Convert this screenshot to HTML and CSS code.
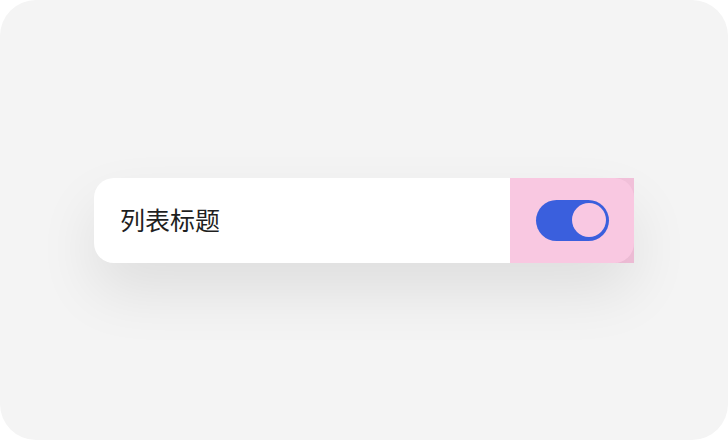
FILE: index.html
```html
<!DOCTYPE html>
<html lang="zh-CN">
<head>
    <meta charset="UTF-8">
    <meta name="viewport" content="width=device-width, initial-scale=1.0">
    <title>列表</title>
    <link rel="stylesheet" href="styles.css">
</head>
<body>
    <div class="stage">
        <div class="list-item">
            <div class="list-title">列表标题</div>
            <div class="list-action">
                <div class="switch">
                    <span class="switch-knob"></span>
                </div>
            </div>
        </div>
    </div>
</body>
</html>
```

FILE: styles.css
```css
body {
    margin: 0;
    background: #fff;
    font-family: "Noto Sans CJK SC", "Noto Sans", sans-serif;
}

.stage {
    width: 728px;
    height: 440px;
    background: #f4f4f4;
    border-radius: 36px;
    display: flex;
    align-items: center;
    justify-content: center;
}

.list-item {
    width: 540px;
    height: 85px;
    background: #fff;
    border-radius: 20px;
    display: flex;
    align-items: stretch;
    box-shadow: 0 28px 60px rgba(0, 0, 0, 0.09);
}

.list-title {
    flex: 1;
    display: flex;
    align-items: center;
    padding-left: 26px;
    padding-bottom: 2px;
    font-size: 25px;
    line-height: 1;
    color: #1f1f1f;
}

.list-action {
    width: 124px;
    display: flex;
    align-items: center;
    justify-content: center;
    background: rgba(240, 110, 175, 0.38);
}

.switch {
    width: 73px;
    height: 41px;
    border-radius: 21px;
    background: #3a5fdd;
    display: flex;
    align-items: center;
    justify-content: flex-end;
    padding-right: 3px;
    box-sizing: border-box;
}

.switch-knob {
    width: 34px;
    height: 34px;
    border-radius: 50%;
    background: #f9c8e2;
}
```
